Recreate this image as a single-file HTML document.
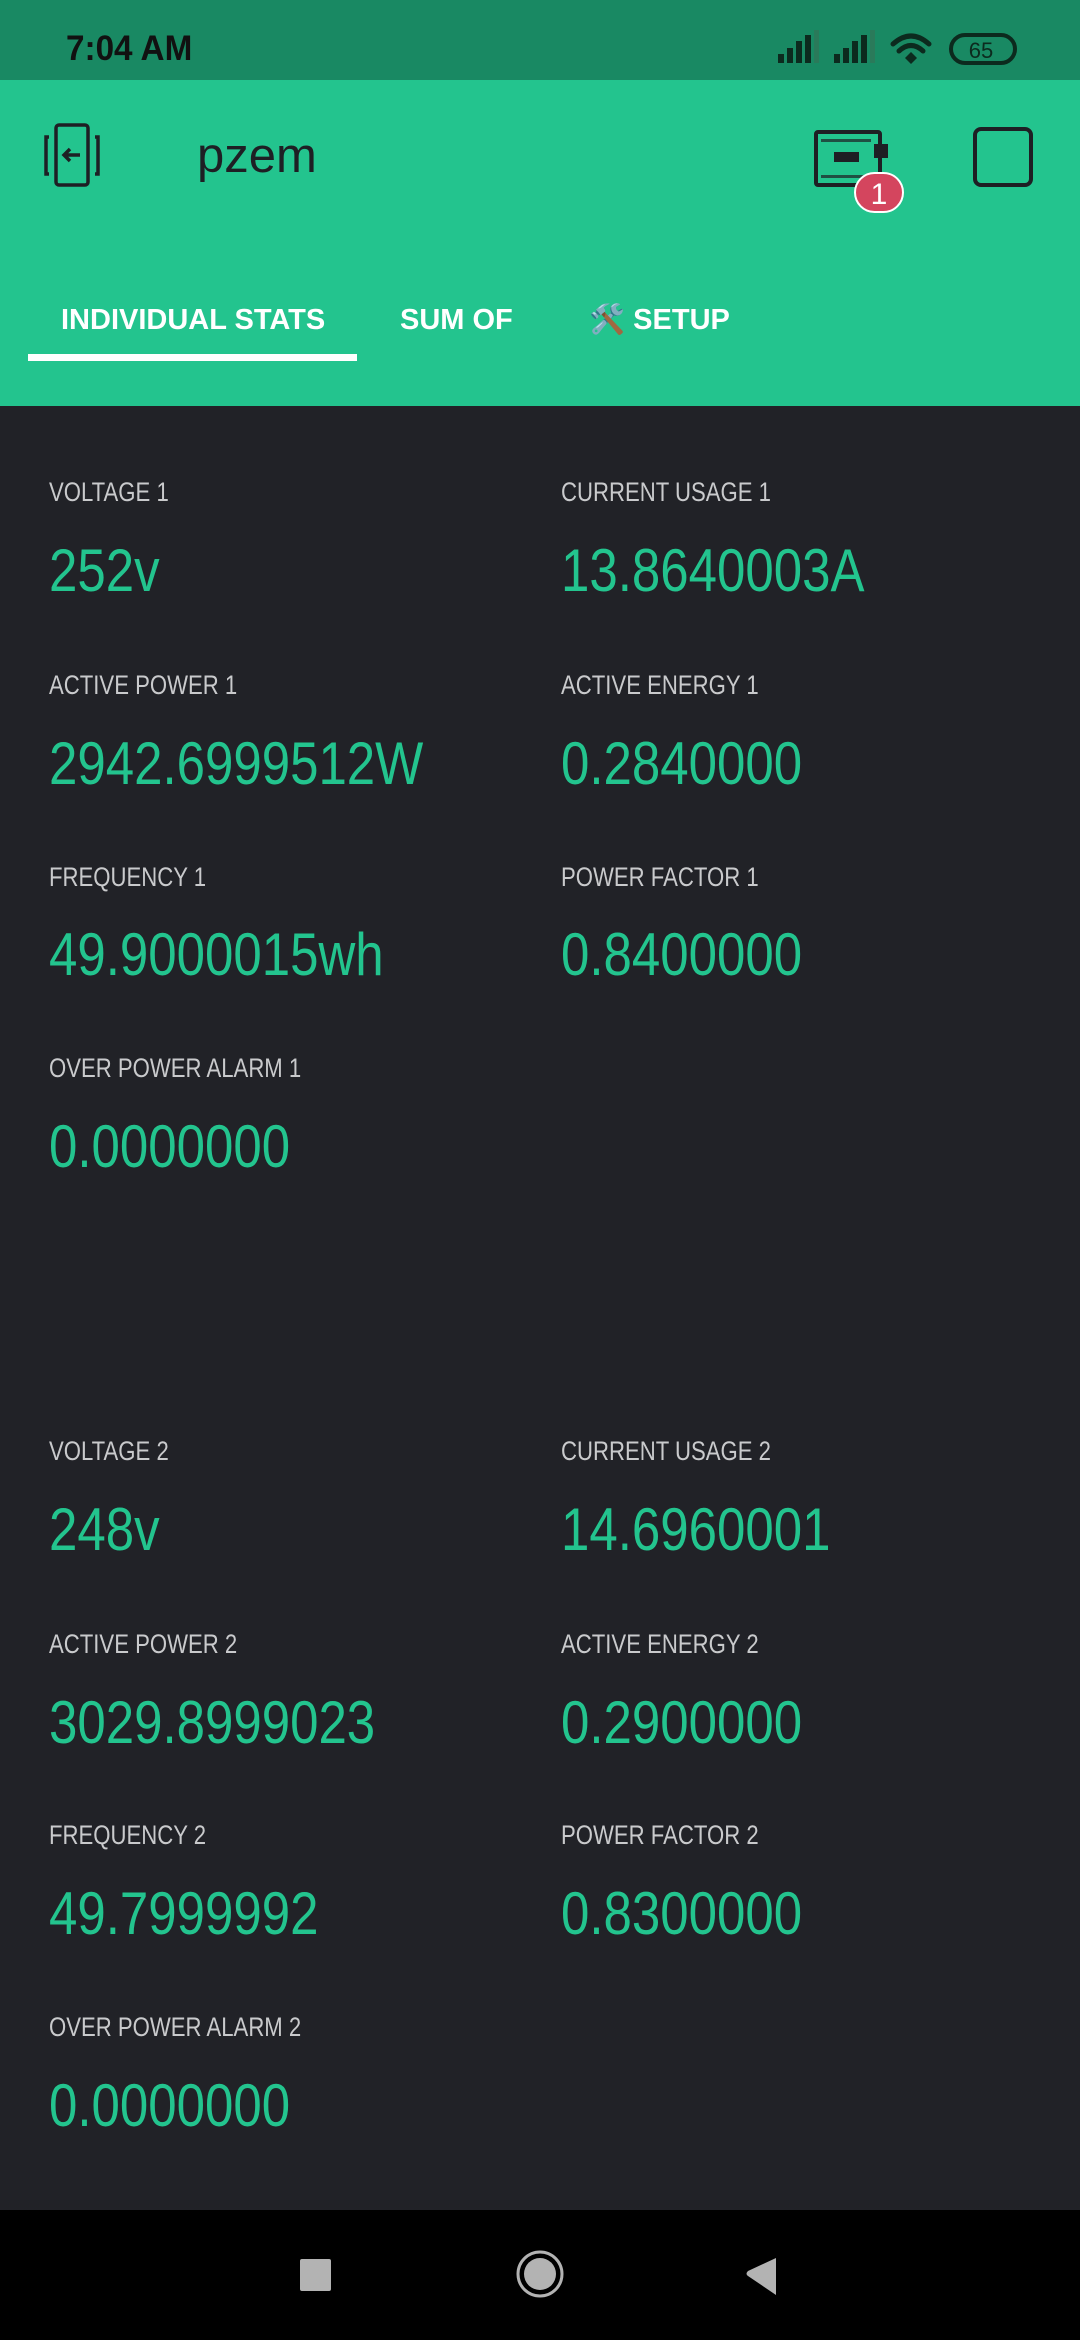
<!DOCTYPE html>
<html><head><meta charset="utf-8"><style>
*{margin:0;padding:0;box-sizing:border-box}
body{width:1080px;height:2340px;background:#212227;position:relative;overflow:hidden;font-family:"Liberation Sans",sans-serif}
.abs{position:absolute}
.lbl{position:absolute;color:#c9cacc;font-size:27px;line-height:30px;transform:scaleX(.82);transform-origin:left;white-space:nowrap}
.val{position:absolute;color:#23c48e;font-size:60px;line-height:64px;transform:scaleX(.85);transform-origin:left;white-space:nowrap}
.tab{position:absolute;color:#fff;font-weight:bold;font-size:29px;top:302px;line-height:36px;white-space:nowrap}
</style></head><body>
<div class="abs" style="left:0;top:0;width:1080px;height:80px;background:#198963"></div>
<div class="abs" style="left:66px;top:29px;font-size:35px;font-weight:bold;color:#111;line-height:40px;transform:scaleX(.95);transform-origin:left">7:04 AM</div>
<svg class="abs" style="left:770px;top:28px" width="310" height="42">
<g fill="#0c2a1e"><rect x="8" y="26" width="6" height="9"/><rect x="17" y="20" width="6" height="15"/><rect x="26" y="13" width="6" height="22"/><rect x="35" y="7" width="6" height="28"/></g><rect x="44" y="2" width="5" height="33" fill="#2a7a5a"/>
<g fill="#0c2a1e"><rect x="64" y="26" width="6" height="9"/><rect x="73" y="20" width="6" height="15"/><rect x="82" y="13" width="6" height="22"/><rect x="91" y="7" width="6" height="28"/></g><rect x="100" y="2" width="5" height="33" fill="#2a7a5a"/>
<g fill="none" stroke="#0c2a1e" stroke-width="5" stroke-linecap="round"><path d="M123 16 Q141 0 159 16"/><path d="M129 23 Q141 12 153 23"/></g><path d="M135 30 L141 24 L147 30 L141 36Z" fill="#0c2a1e"/>
<rect x="181" y="7" width="64" height="28" rx="14" fill="none" stroke="#0c2a1e" stroke-width="4"/>
<text x="211" y="30" font-size="22" font-family="Liberation Sans" fill="#0c2a1e" text-anchor="middle">65</text>
</svg>
<div class="abs" style="left:0;top:80px;width:1080px;height:326px;background:#23c48e"></div>
<svg class="abs" style="left:40px;top:122px" width="80" height="70" fill="none" stroke="#1e1f24" stroke-width="3.5">
<rect x="16" y="3" width="32" height="60" rx="3"/><path d="M9 15 H6 V52 H9 M55 15 H58 V52 H55"/><path d="M40 33 H24 M30 27 L24 33 L30 39"/></svg>
<div class="abs" style="left:197px;top:126px;font-size:49px;color:#1e1f24;line-height:60px">pzem</div>
<svg class="abs" style="left:812px;top:128px" width="100" height="90">
<rect x="4" y="4" width="64" height="53" rx="2" fill="none" stroke="#1e1f24" stroke-width="4"/>
<rect x="62" y="16" width="14" height="14" fill="#1e1f24"/>
<rect x="22" y="24" width="25" height="10" fill="#1e1f24"/>
<g fill="#1e1f24" opacity=".7"><path d="M9 11h50v3H9z M9 47h50v3H9z"/></g>
<rect x="43" y="45" width="48" height="39" rx="19.5" fill="#d4455e" stroke="#fff" stroke-width="2"/>
<text x="67" y="76" font-size="30" fill="#fff" text-anchor="middle" font-family="Liberation Sans">1</text>
</svg>
<div class="abs" style="left:973px;top:127px;width:60px;height:60px;border:4px solid #1e1f24;border-radius:8px"></div>
<div class="tab" style="left:61px">INDIVIDUAL STATS</div>
<div class="tab" style="left:400px">SUM OF</div>
<div class="tab" style="left:589px">🛠️ SETUP</div>
<div class="abs" style="left:28px;top:354px;width:329px;height:7px;background:#fff"></div>

<div class="lbl" style="left:49px;top:477px">VOLTAGE 1</div><div class="val" style="left:49px;top:539px">252v</div>
<div class="lbl" style="left:561px;top:477px">CURRENT USAGE 1</div><div class="val" style="left:561px;top:539px">13.8640003A</div>
<div class="lbl" style="left:49px;top:670px">ACTIVE POWER 1</div><div class="val" style="left:49px;top:732px">2942.6999512W</div>
<div class="lbl" style="left:561px;top:670px">ACTIVE ENERGY 1</div><div class="val" style="left:561px;top:732px">0.2840000</div>
<div class="lbl" style="left:49px;top:862px">FREQUENCY 1</div><div class="val" style="left:49px;top:923px">49.9000015wh</div>
<div class="lbl" style="left:561px;top:862px">POWER FACTOR 1</div><div class="val" style="left:561px;top:923px">0.8400000</div>
<div class="lbl" style="left:49px;top:1053px">OVER POWER ALARM 1</div><div class="val" style="left:49px;top:1115px">0.0000000</div>

<div class="lbl" style="left:49px;top:1436px">VOLTAGE 2</div><div class="val" style="left:49px;top:1498px">248v</div>
<div class="lbl" style="left:561px;top:1436px">CURRENT USAGE 2</div><div class="val" style="left:561px;top:1498px">14.6960001</div>
<div class="lbl" style="left:49px;top:1629px">ACTIVE POWER 2</div><div class="val" style="left:49px;top:1691px">3029.8999023</div>
<div class="lbl" style="left:561px;top:1629px">ACTIVE ENERGY 2</div><div class="val" style="left:561px;top:1691px">0.2900000</div>
<div class="lbl" style="left:49px;top:1820px">FREQUENCY 2</div><div class="val" style="left:49px;top:1882px">49.7999992</div>
<div class="lbl" style="left:561px;top:1820px">POWER FACTOR 2</div><div class="val" style="left:561px;top:1882px">0.8300000</div>
<div class="lbl" style="left:49px;top:2012px">OVER POWER ALARM 2</div><div class="val" style="left:49px;top:2074px">0.0000000</div>

<div class="abs" style="left:0;top:2210px;width:1080px;height:130px;background:#000"></div>
<svg class="abs" style="left:0;top:2210px" width="1080" height="130">
<rect x="300" y="49" width="31" height="32" rx="2" fill="#b3b3b3"/>
<circle cx="540" cy="64" r="22" fill="none" stroke="#b3b3b3" stroke-width="3"/><circle cx="540" cy="64" r="16" fill="#b3b3b3"/>
<path d="M776 48 V85 L748 66 Q745 64 748 61Z" fill="#b3b3b3"/>
</svg>
</body></html>
